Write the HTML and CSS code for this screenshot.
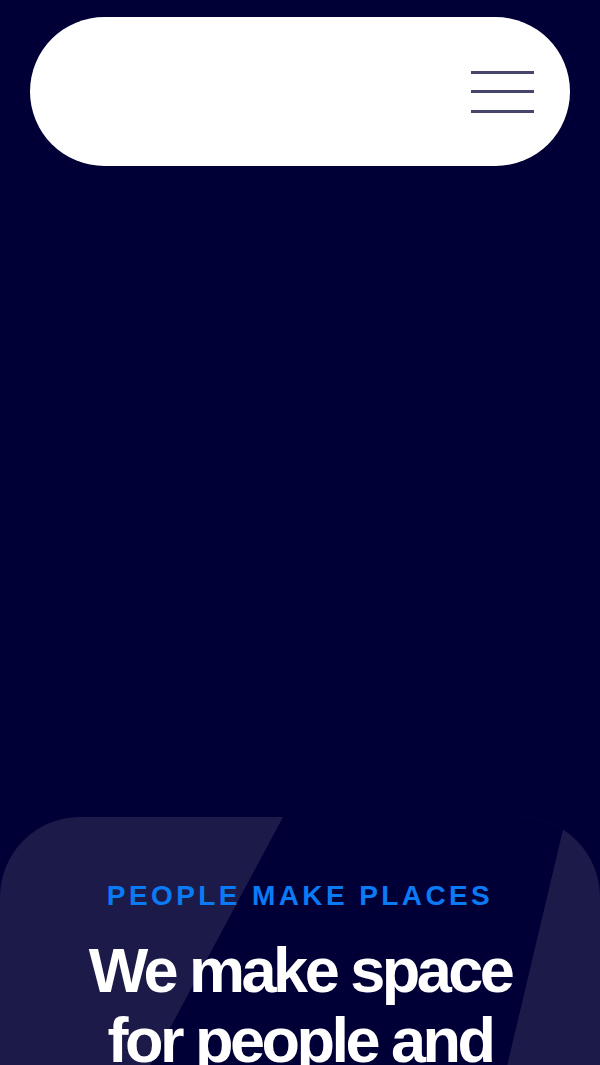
FILE: index.html
```html
<!DOCTYPE html>
<html lang="en">
<head>
<meta charset="utf-8">
<title>People make places</title>
<link rel="stylesheet" href="styles.css">
</head>
<body>
  <header class="top">
    <nav class="pill">
      <button class="menu" aria-label="Open menu">
        <span class="bar"></span>
        <span class="bar"></span>
        <span class="bar"></span>
      </button>
    </nav>
  </header>
  <div class="hero-space"></div>
  <section class="card">
    <svg class="swoosh" viewBox="0 0 600 600" width="600" height="600" aria-hidden="true">
      <polygon points="283,0 566,0 424,600 -38,600" fill="#000036"/>
    </svg>
    <div class="card-content">
      <p class="eyebrow">PEOPLE MAKE PLACES</p>
      <h1 class="title">We make space for people and nature to thrive</h1>
    </div>
  </section>
</body>
</html>
```

FILE: styles.css
```css
html, body {
  margin: 0;
  padding: 0;
  background: #000036;
}
body {
  font-family: "Liberation Sans", Arial, sans-serif;
  overflow: hidden;
}
.top {
  padding: 17px 30px 0;
}
.pill {
  height: 149px;
  background: #ffffff;
  border-radius: 75px;
  display: flex;
  align-items: center;
  justify-content: flex-end;
  padding: 0 36px;
}
.menu {
  width: 63px;
  height: 42px;
  padding: 0;
  border: 0;
  background: transparent;
  display: flex;
  flex-direction: column;
  justify-content: space-between;
}
.bar {
  display: block;
  width: 63px;
  height: 3px;
  background: #46456c;
}
.hero-space {
  height: 651px;
}
.card {
  position: relative;
  overflow: hidden;
  background: #1c1a48;
  border-radius: 80px 80px 0 0;
  height: 600px;
}
.swoosh {
  position: absolute;
  left: 0;
  top: 0;
  display: block;
}
.card-content {
  position: relative;
  padding: 63px 0 0;
  text-align: center;
}
.eyebrow {
  margin: 0;
  font-size: 28px;
  line-height: 32px;
  font-weight: bold;
  letter-spacing: 3.4px;
  color: #0a7af5;
}
.title {
  margin: 23px auto 0;
  width: 450px;
  font-size: 63px;
  line-height: 70px;
  font-weight: bold;
  letter-spacing: -3.5px;
  color: #ffffff;
}
```
